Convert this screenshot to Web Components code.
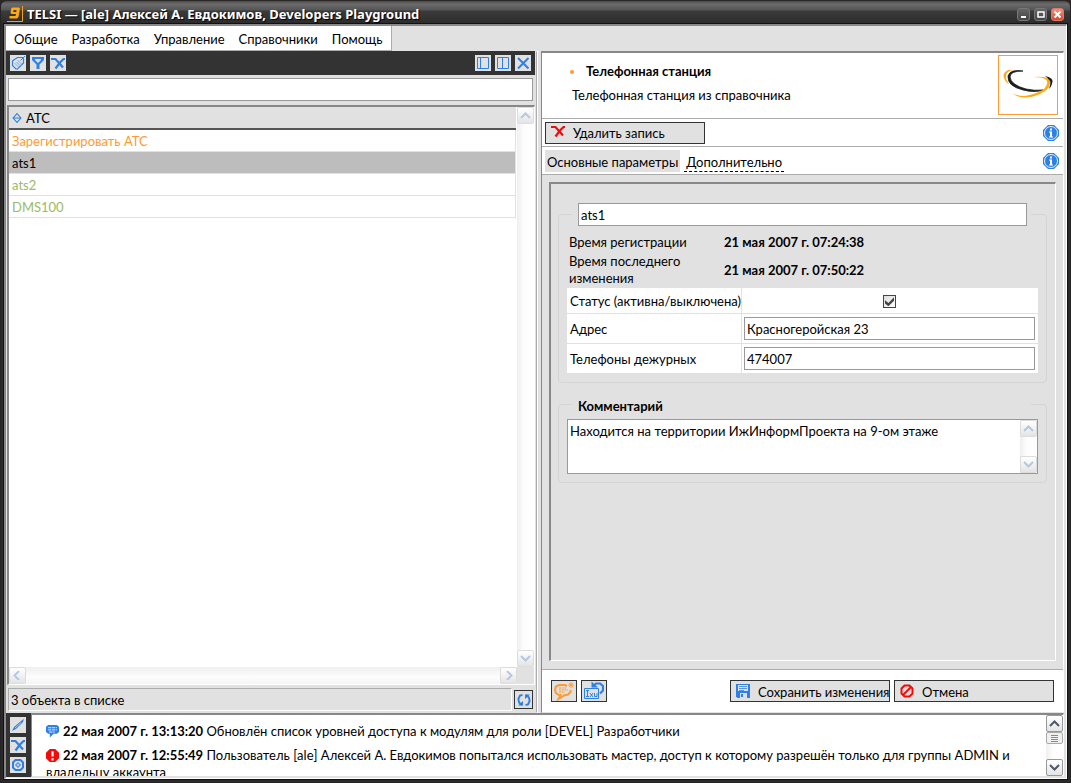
<!DOCTYPE html>
<html lang="ru">
<head>
<meta charset="utf-8">
<title>TELSI</title>
<style>
  html, body { margin: 0; height: 100%; }
  body {
    font: 13px/17px Lato, "Open Sans", "Noto Sans", sans-serif;
    color: #000;
    background: #2b2725;
    --face: #e1e1e1;
    --dark: #333;
    --line: #acacac;
    --shade: #888;
    --blue: #2f80e6;
    --orange: #ff9a33;
    --green: #99bb66;
  }
</style>
</head>
<body>
<telsi-window></telsi-window>
<script>
const reset = `
  *, *::before, *::after { box-sizing: border-box; }
  button, input, textarea { font: inherit; color: inherit; border-radius: 0; }
  input, textarea { margin: 0; }
  button { cursor: pointer; padding: 0; }
  input, textarea { outline: none; }
`;

class UiElement extends HTMLElement {
  constructor() {
    super();
    const t = document.createElement('template');
    t.innerHTML = `<style>${reset}${this.constructor.css}</style>${this.constructor.html}`;
    this.attachShadow({ mode: 'open' }).append(t.content.cloneNode(true));
  }
}

const ICONS = {
  tag: `<g fill="none" stroke="#2f80e6"><path d="M3 5.500 7.500 2.500 12.500 2.500 13.500 4 13.500 8 7.500 14 6 14 2.500 10.500 2.500 6Z" stroke-width="1.200"/><path d="M5 8.500 8.500 12M6.500 7 10 10.500M8 5.500 11.500 9" stroke-dasharray="1 .6"/><path d="M10.500 5.500 15 1"/></g>`,
  filter: `<path d="M2 2h12v3l-4.500 4.500V14h-3V9.500L2 5Z" fill="#2f80e6"/><path d="M5 4h6v1L8 8 5 5Z" fill="#e1e1e1"/>`,
  cut: `<path d="M1 4h4.500L13 12.500M15 4h-1.500L10 7.500 5.500 13.500" fill="none" stroke="currentColor" stroke-width="2.200"/>`,
  paneLeft: `<path d="M2.500 2.500h11v11h-11ZM5.500 2.500v11" fill="none" stroke="#2f80e6"/>`,
  paneSplit: `<path d="M2.500 2.500h11v11h-11ZM7.500 2.500v11" fill="none" stroke="#2f80e6"/>`,
  close: `<path d="M3 3 13.500 13.500M13.500 3 3 13.500" fill="none" stroke="#2f80e6" stroke-width="2"/>`,
  pen: `<path d="M2 14 4 10 11 4 14 2 13 5 6 12Z" fill="#2f80e6"/><path d="M5 11 11 5.500" stroke="#e1e1e1" stroke-width=".7"/>`,
  target: `<path d="M5.500 3h5L13 5.500v5L10.500 13h-5L3 10.500v-5Z" fill="none" stroke="#2f80e6" stroke-width="2"/><path d="M8 5 11 8 8 11 5 8Z" fill="#2f80e6"/><path d="M8 6.500v3M6.500 8h3" stroke="#e1e1e1"/>`,
  sort: `<path d="M8 3 12.500 8 8 13 3.500 8ZM3.500 8h9" fill="none" stroke="#2f80e6" stroke-width="1.200"/>`,
  refresh: `<g fill="none" stroke="#2f80e6" stroke-width="1.900"><path d="M6.500 2.800 4 3.500 2.400 7 3 10.500 6 13"/><path d="M9.500 13.200 12 12.500 13.600 9 13 5.500 10 3"/></g><path d="M2 13.500h5V9ZM14 2.500H9V7Z" fill="#2f80e6"/>`,
  info: `<path d="M5 0h6L16 5v6L11 16H5L0 11V5Z" fill="#2f80e6"/><circle cx="8" cy="8" r="6.500" fill="none" stroke="#fff" stroke-width=".9"/><path d="M7 3.500h2v2H7ZM6 6.500h3v5h1v1H6v-1h1v-4H6Z" fill="#fff"/>`,
  say: `<path d="M4 2h8l2 1.500v5L12 10H9l-3.500 3.500V10H4L2 8.500v-5Z" fill="#2f80e6"/><path d="M4 4.500h8M4 6.500h8M5 8.500h5" stroke="#fff" stroke-width=".8" stroke-dasharray="3 .6"/>`,
  alert: `<path d="M5.500 2h5L14 5.500v5L10.500 14h-5L2 10.500v-5Z" fill="#f30b0b"/><path d="M7 4h2v5H7ZM7 10.500h2v2H7Z" fill="#fff"/>`,
  forbid: `<path d="M5.500 2.500h5l3 3v5l-3 3h-5l-3-3v-5Z" fill="none" stroke="#f30b0b" stroke-width="2"/><path d="M4 12 12 4" stroke="#f30b0b" stroke-width="2"/>`,
  disk: `<path d="M1 1h14v14H2.500L1 13.500Z" fill="#2f80e6"/><path d="M3 2h10v6H3ZM5 10h7v5H5Z" fill="#e1e1e1"/><path d="M4 3.500h8M4 5.500h8M4 7.500h5" stroke="#2f80e6" stroke-width=".8"/><path d="M6 11h2v3H6Z" fill="#2f80e6"/>`,
  comment: `<path d="M13 4 11 3H5L2 4.500 1 8l1 3L5 13h1.500L4.500 17 10 13.500l4-1L16.500 10V8" fill="none" stroke="#ff9a33" stroke-width="2"/><path d="M5 6h7M5 8h9M5 10h6" stroke="#ff9a33" stroke-dasharray="2 .7"/><path d="M17 0v6M14 3h6M15 1l4 4M19 1l-4 4" stroke="#ff9a33" stroke-width=".9"/>`,
  rename: `<path d="M.5 7.500h14v10H.5Z" fill="#e1e1e1" stroke="#2f80e6"/><path d="M2 9.500h3M3.500 9.500v6M2 15.500h3M6 12l3 4M9 12l-3 4M10.500 12v3.500H13V12" stroke="#2f80e6" fill="none"/><path d="M10 4.500 12 2.500h4l3 2.500v4.500l-3 3" fill="none" stroke="#2f80e6" stroke-width="2.200"/><path d="M7.500 .5v6H14Z" fill="#2f80e6"/>`
};
const BOXES = { comment: '0 0 20 18', rename: '0 0 20 20', say: '2 2 12 12', alert: '2 2 12 12' };

class UiIcon extends HTMLElement {
  connectedCallback() {
    if (this.shadowRoot) return;
    const name = this.getAttribute('name');
    const size = +this.getAttribute('size') || 16;
    this.attachShadow({ mode: 'open' }).innerHTML =
      `<style>:host{display:inline-block;flex:none;width:${size}px;height:${size}px;color:var(--icon,var(--blue))}svg{display:block}</style>
       <svg width="${size}" height="${size}" viewBox="${BOXES[name] || '0 0 16 16'}" aria-hidden="true">${ICONS[name]}</svg>`;
  }
}
customElements.define('ui-icon', UiIcon);

/* Windows-style scroll bar; "horizontal" and "disabled" are attributes. */
class UiScrollbar extends UiElement {
  static css = `
    :host { display: flex; flex-direction: column; justify-content: space-between; flex: none; width: 17px;
            background: linear-gradient(90deg, #efefef, #fdfdfd 40%, #fff); --arrow: #4d5a6b; --edge: #999; }
    :host([horizontal]) { flex-direction: row; width: auto; height: 17px; background: linear-gradient(#efefef, #fdfdfd 60%, #f4f4f4); }
    :host([disabled]) { --arrow: #b4c8e2; --edge: #dcdcdc; }
    button { width: 17px; height: 17px; border: 1px solid var(--edge); border-radius: 2px; display: grid; place-items: center;
             background: linear-gradient(#fff, #e4e4e4); }
    svg { fill: none; stroke: var(--arrow); stroke-width: 2; }
    .grip { height: 12px; margin-bottom: auto; border: 1px solid #aaa; border-radius: 2px;
            background: repeating-linear-gradient(#888 0 1px, #f4f4f4 1px 2px) center / 7px 7px no-repeat, #f0f0f0; }
    :host([disabled]) .grip { display: none; }
    .h { display: none; }
    :host([horizontal]) .h { display: block; }
    :host([horizontal]) .v { display: none; }
  `;
  static html = `
    <button aria-label="Назад"><svg width="11" height="9"><path class="v" d="M1 7 5.500 2.500 10 7"/><path class="h" d="M7 0 2.500 4.500 7 9"/></svg></button>
    <div class="grip"></div>
    <button aria-label="Вперёд"><svg width="11" height="9"><path class="v" d="M1 2 5.500 6.500 10 2"/><path class="h" d="M4 0 8.500 4.500 4 9"/></svg></button>
  `;
}
customElements.define('ui-scrollbar', UiScrollbar);

class TitleBar extends UiElement {
  static css = `
    :host { display: flex; align-items: center; height: 24px; padding: 4px 6px 0 6px; gap: 4px; color: #fff;
            font-family: "Noto Sans", sans-serif; font-weight: bold;
            border-top: 1px solid #2b2725; border-radius: 6px 6px 0 0;
            background: linear-gradient(#4a4a4a, #6c6c6c 3px, #555 9px, #3b3b3b 10px, #2b2b2b); }
    .logo { flex: none; }
    h1 { flex: 1; margin: 0; font: inherit; white-space: nowrap; overflow: hidden; text-shadow: 1px 1px 1px #000; }
    .ctl { display: flex; gap: 4px; }
    button { width: 13px; height: 13px; border: 1px solid #777; border-radius: 3px; background: linear-gradient(#666, #444); display: grid; place-items: center; }
    button.x { background: linear-gradient(#f4907c, #e0442c); border-color: #d8796a; }
    svg { display: block; }
  `;
  static html = `
    <svg class="logo" width="16" height="17" viewBox="0 0 16 17"><path d="M15.500 0v15.500H0" fill="none" stroke="#f0a020"/>
      <path d="M5 1.500h7l1 1L11.500 11l-1.500 1.500H2.500V10h6l.5-2H4.500L3.500 7l.7-4.500ZM6.500 4 6.200 6h3L9.600 4Z" fill="#ffa812" fill-rule="evenodd"/></svg>
    <h1>TELSI — [ale] Алексей А. Евдокимов, Developers Playground</h1>
    <div class="ctl">
      <button aria-label="Свернуть"><svg width="9" height="9"><path d="M2 6h5v2H2Z" fill="#fff"/></svg></button>
      <button aria-label="Развернуть"><svg width="9" height="9"><path d="M2 2h6v5H2Z" fill="none" stroke="#fff" stroke-width="1.500"/></svg></button>
      <button class="x" aria-label="Закрыть"><svg width="9" height="9"><path d="M1.500 1.500l6 6M7.500 1.500l-6 6" stroke="#fff" stroke-width="2"/></svg></button>
    </div>
  `;
}
customElements.define('title-bar', TitleBar);

class MenuBar extends UiElement {
  static css = `
    :host { display: flex; height: 25px; background: var(--face); }
    nav { display: flex; align-items: center; gap: 14px; padding: 2px 8px 0; background: #fff; border-right: 1px solid var(--line); border-bottom: 1px solid var(--line); }
    a { color: inherit; text-decoration: none; white-space: nowrap; }
  `;
  static html = `<nav><a href="#common">Общие</a><a href="#dev">Разработка</a><a href="#manage">Управление</a><a href="#refs">Справочники</a><a href="#help">Помощь</a></nav>`;
}
customElements.define('menu-bar', MenuBar);

/* Dark strip of small icon buttons. */
class ToolStrip extends UiElement {
  static css = `
    :host { display: flex; gap: 4px; padding: 4px; background: var(--dark); flex: none; }
    :host([vertical]) { flex-direction: column; }
    ::slotted(button) { width: 16px; height: 16px; margin: 0; border: 0; background: var(--face); display: grid; }
    ::slotted(.push) { margin-left: auto; }
  `;
  static html = `<slot></slot>`;
}
customElements.define('tool-strip', ToolStrip);

class ObjectList extends UiElement {
  static css = `
    :host { display: flex; flex-direction: column; min-width: 0; background: var(--face); }
    .search { height: 23px; margin: 3px 2px 4px; border: 1px solid #999; background: #fff; padding: 0 4px; }
    .box { flex: 1; min-height: 0; display: grid; grid-template-columns: minmax(0, 1fr) 17px; grid-template-rows: minmax(0, 1fr) 17px;
           margin: 0 0 1px 1px; border: 1px solid; border-width: 2px 1px 1px 2px; border-color: var(--shade) #fff #fff var(--shade); }
    .view { background: #fff; padding-right: 1px; overflow: hidden; }
    .corner { background: var(--face); }
    table { width: 100%; border-collapse: separate; border-spacing: 0; }
    th { height: 23px; padding: 1px 1px 0; background: var(--face); text-align: left; font-weight: normal; border-bottom: 2px solid #555; }
    th span { display: flex; align-items: center; gap: 2px; }
    td { height: 22px; padding: 1px 3px 0; border-bottom: 1px solid var(--face); border-right: 1px solid var(--face); color: var(--green); }
    .new { color: var(--orange); }
    .sel { background: #bdbdbd; color: #000; }
    .status { display: flex; align-items: center; gap: 2px; height: 27px; padding: 2px; }
    .status p { flex: 1; margin: 0; height: 23px; padding: 3px 3px 0 2px; border: 1px solid; border-color: var(--line) #fff #fff var(--line); }
    .status button { width: 19px; height: 19px; border: 1px solid var(--dark); background: var(--face); display: grid; place-items: center; }
  `;
  static html = `
    <tool-strip>
      <button aria-label="Метка"><ui-icon name="tag"></ui-icon></button>
      <button aria-label="Фильтр"><ui-icon name="filter"></ui-icon></button>
      <button aria-label="Сбросить"><ui-icon name="cut"></ui-icon></button>
      <button class="push" aria-label="Панель слева"><ui-icon name="paneLeft"></ui-icon></button>
      <button aria-label="Две панели"><ui-icon name="paneSplit"></ui-icon></button>
      <button aria-label="Закрыть"><ui-icon name="close"></ui-icon></button>
    </tool-strip>
    <input class="search" type="text" aria-label="Поиск">
    <div class="box">
      <div class="view">
        <table>
          <thead><tr><th><span><ui-icon name="sort" size="14"></ui-icon>АТС</span></th></tr></thead>
          <tbody>
            <tr><td class="new">Зарегистрировать АТС</td></tr>
            <tr><td class="sel">ats1</td></tr>
            <tr><td>ats2</td></tr>
            <tr><td>DMS100</td></tr>
          </tbody>
        </table>
      </div>
      <ui-scrollbar disabled></ui-scrollbar>
      <ui-scrollbar horizontal disabled></ui-scrollbar>
      <div class="corner"></div>
    </div>
    <div class="status">
      <p>3 объекта в списке</p>
      <button aria-label="Обновить"><ui-icon name="refresh"></ui-icon></button>
    </div>
  `;
}
customElements.define('object-list', ObjectList);

class StationEditor extends UiElement {
  static css = `
    :host { display: flex; flex-direction: column; min-width: 0; background: #fff; border: 1px solid; border-top-width: 2px; border-color: var(--shade) #fff var(--face) var(--shade); }
    header { display: flex; height: 66px; padding: 2px 5px 0 28px; border-bottom: 1px solid var(--line); }
    header div { flex: 1; }
    h2 { display: flex; align-items: center; gap: 12px; margin: 0; padding-top: 8px; font: inherit; font-weight: bold; }
    h2::before { content: ""; width: 4px; height: 4px; border-radius: 2px; background: var(--orange); }
    header p { margin: 7px 0 0 2px; }
    .logo { flex: none; width: 60px; height: 60px; border: 1px solid var(--orange); }
    .bar { display: flex; align-items: center; height: 28px; padding: 0 4px 0 3px; border-bottom: 1px solid var(--line); }
    .bar .help { margin-left: auto; border: 0; background: none; display: grid; }
    .cmd { display: flex; align-items: center; width: 160px; height: 22px; border: 1px solid var(--dark); background: var(--face); white-space: nowrap; }
    .cmd ui-icon { margin: 0 7px 0 4px; }
    .cmd span { padding-top: 2px; }
    .del ui-icon { --icon: #f30b0b; margin-bottom: 4px; }
    .tab { text-decoration: none; color: inherit; height: 22px; padding: 4px 2px 0; margin-right: 4px; white-space: nowrap; }
    .tab.on { background: var(--face); }
    .tab.off { border-bottom: 1px dashed #000; }
    main { flex: 1; min-height: 0; background: var(--face); padding: 7px 7px 8px; display: flex; }
    .panel { flex: 1; min-width: 0; overflow: hidden; padding: 19px 8px 0 7px; border: 1px solid; border-width: 2px 1px 1px 2px; border-color: var(--shade) #fff #fff var(--shade); }
    fieldset { min-width: 0; margin: 0 0 11px; padding: 0 8px 8px; border: 1px solid #d4d4d4; border-radius: 4px; }
    legend { width: calc(100% - 12px); margin: 0 5px; padding: 0 4px 0 6px; font-weight: bold; }
    legend.title { padding-top: 4px; }
    .text { display: block; width: 100%; height: 23px; padding: 1px 2px; border: 1px solid #999; background: #fff; }
    legend .text { font-weight: normal; }
    dl { display: grid; grid-template-columns: 145px 1fr; column-gap: 10px; row-gap: 2px; align-items: center; margin: 8px 2px 1px; }
    dd { margin: 0; font-weight: bold; }
    .grid { width: 100%; border-spacing: 0; background: #fff; table-layout: fixed; }
    .grid th, .grid td { height: 30px; padding: 0 3px 0 2px; border-bottom: 1px solid var(--face); text-align: left; font-weight: normal; }
    .grid th { width: 175px; padding: 2px 0 0 3px; border-right: 1px solid var(--face); white-space: nowrap; }
    .grid tr:first-child > * { height: 26px; }
    .grid .mid { text-align: center; }
    .check { appearance: none; width: 13px; height: 13px; border: 1px solid #444;
             background: linear-gradient(135deg, #ddd, #fff); display: inline-grid; place-items: center; vertical-align: middle; }
    .check:checked::before { content: ""; width: 9px; height: 9px; background: #444; clip-path: polygon(0 35%, 38% 65%, 100% 0, 100% 40%, 38% 100%, 0 70%); }
    .note { display: flex; height: 55px; margin-top: 4px; border: 1px solid #999; background: #fff; }
    .note textarea { flex: 1; min-width: 0; border: 0; padding: 3px 2px 0; resize: none; overflow: hidden; background: none; }
    footer { display: flex; align-items: center; gap: 4px; height: 43px; padding: 0 9px; border-top: 1px solid var(--line); }
    .sq { width: 26px; height: 22px; border: 1px solid var(--dark); background: var(--face); display: grid; place-items: center; }
    .sq.last { margin-right: auto; }
  `;
  static html = `
    <header>
      <div><h2>Телефонная станция</h2><p>Телефонная станция из справочника</p></div>
      <svg class="logo" viewBox="0 0 58 58" role="img" aria-label="Логотип">
        <path d="M9 14Q3 17 5 22Q7 27 10 28Q4 20 9 16Q12 14 14 14Z" fill="#ffa812"/>
        <path d="M24 15Q11 13 9 20Q8 30 24 34Q36 37 44 34Q36 35 27 33Q12 29 11 21Q11 15 24 15Z" fill="#1c1c1c" stroke="#1c1c1c" stroke-width=".8"/>
        <path d="M35 21Q49 20 51 25Q52 33 41 38Q27 44 18 40Q15 39 14 37Q17 40 26 40Q38 38 45 33Q51 26 46 23Q43 21 35 21Z" fill="#ffa812"/>
        <path d="M46 20Q56 22 53 28Q52 31 50 33Q52 27 51 25Q49 22 46 20Z" fill="#1c1c1c"/>
      </svg>
    </header>
    <div class="bar">
      <button class="cmd del"><ui-icon name="cut"></ui-icon><span>Удалить запись</span></button>
      <button class="help" aria-label="Справка"><ui-icon name="info"></ui-icon></button>
    </div>
    <div class="bar">
      <a class="tab on" href="#main">Основные параметры</a>
      <a class="tab off" href="#extra">Дополнительно</a>
      <button class="help" aria-label="Справка"><ui-icon name="info"></ui-icon></button>
    </div>
    <main><div class="panel">
      <fieldset>
        <legend><input class="text" type="text" value="ats1" aria-label="Название"></legend>
        <dl>
          <dt>Время регистрации</dt><dd>21 мая 2007 г. 07:24:38</dd>
          <dt>Время последнего изменения</dt><dd>21 мая 2007 г. 07:50:22</dd>
        </dl>
        <table class="grid">
          <tr><th><label for="status">Статус (активна/выключена)</label></th><td class="mid"><input class="check" id="status" type="checkbox" checked></td></tr>
          <tr><th><label for="addr">Адрес</label></th><td><input class="text" id="addr" type="text" value="Красногеройская 23"></td></tr>
          <tr><th><label for="phones">Телефоны дежурных</label></th><td><input class="text" id="phones" type="text" value="474007"></td></tr>
        </table>
      </fieldset>
      <fieldset>
        <legend class="title"><label for="note">Комментарий</label></legend>
        <div class="note"><textarea id="note">Находится на территории ИжИнформПроекта на 9-ом этаже</textarea><ui-scrollbar disabled></ui-scrollbar></div>
      </fieldset>
    </div></main>
    <footer>
      <button class="sq" aria-label="Добавить комментарий"><ui-icon name="comment" size="20"></ui-icon></button>
      <button class="sq last" aria-label="Переименовать"><ui-icon name="rename" size="20"></ui-icon></button>
      <button class="cmd"><ui-icon name="disk"></ui-icon><span>Сохранить изменения</span></button>
      <button class="cmd"><ui-icon name="forbid"></ui-icon><span>Отмена</span></button>
    </footer>
  `;
}
customElements.define('station-editor', StationEditor);

class EventLog extends UiElement {
  static css = `
    :host { display: flex; height: 64px; background: #fff; }
    .view { flex: 1; min-width: 0; display: flex; overflow: hidden; border: 1px solid; border-width: 2px 1px 1px 1px; border-color: var(--shade) #fff var(--face) var(--shade); }
    ul { flex: 1; min-width: 0; margin: 0; padding: 8px 14px 0; list-style: none; }
    li { margin-bottom: 7px; }
    li ui-icon { vertical-align: -2px; margin-right: 4px; }
    tool-strip { width: 25px; }
  `;
  static html = `
    <tool-strip vertical>
      <button aria-label="Записать"><ui-icon name="pen"></ui-icon></button>
      <button aria-label="Очистить"><ui-icon name="cut"></ui-icon></button>
      <button aria-label="Показать"><ui-icon name="target"></ui-icon></button>
    </tool-strip>
    <div class="view">
      <ul>
        <li><ui-icon name="say" size="13"></ui-icon><b>22 мая 2007 г. 13:13:20</b> Обновлён список уровней доступа к модулям для роли [DEVEL] Разработчики</li>
        <li><ui-icon name="alert" size="13"></ui-icon><b>22 мая 2007 г. 12:55:49</b> Пользователь [ale] Алексей А. Евдокимов попытался использовать мастер, доступ к которому разрешён только для группы ADMIN и владельцу аккаунта</li>
      </ul>
      <ui-scrollbar></ui-scrollbar>
    </div>
  `;
}
customElements.define('event-log', EventLog);

class TelsiWindow extends UiElement {
  static css = `
    :host { display: flex; flex-direction: column; height: 100vh; box-sizing: border-box; border: solid #242424; border-width: 0 1px 1px; border-radius: 7px 7px 0 0; background: #2a2a2a; }
    .client { flex: 1; min-height: 0; display: flex; flex-direction: column; margin: 0 3px 3px; padding: 0 2px 1px 0;
              background: var(--face); border: 1px solid; border-width: 2px 1px 1px 2px; border-color: var(--shade) #fff #fff var(--shade); box-shadow: 0 0 0 1px #111; }
    .work { flex: 1; min-height: 0; display: grid; grid-template-columns: minmax(0, 529fr) 6px minmax(0, 523fr); }
    .split { border: 1px solid; border-color: transparent var(--face) transparent var(--line); background: #fff; margin: 0 2px 0 1px; }
  `;
  static html = `
    <title-bar></title-bar>
    <div class="client">
      <menu-bar></menu-bar>
      <div class="work">
        <object-list></object-list>
        <div class="split"></div>
        <station-editor></station-editor>
      </div>
      <event-log></event-log>
    </div>
  `;
}
customElements.define('telsi-window', TelsiWindow);
</script>
</body>
</html>
